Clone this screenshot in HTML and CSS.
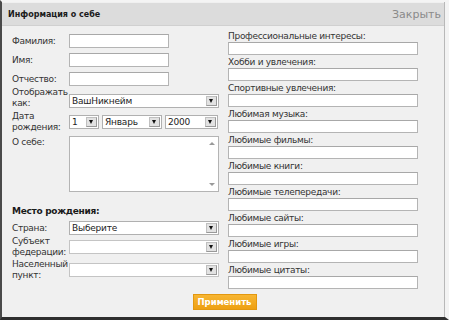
FILE: index.html
```html
<!DOCTYPE html>
<html lang="ru">
<head>
<meta charset="utf-8">
<link rel="stylesheet" href="styles.css">
</head>
<body>
<div class="dialog">
  <div class="header">
    <span class="title">Информация о себе</span>
    <span class="close">Закрыть</span>
  </div>
  <div class="body">
    <div class="left">
      <div class="row r1"><label>Фамилия:</label><div class="input short"></div></div>
      <div class="row r2"><label>Имя:</label><div class="input short"></div></div>
      <div class="row r3"><label>Отчество:</label><div class="input short"></div></div>
      <div class="row two r4"><label>Отображать<br>как:</label><div class="select wide"><span>ВашНикнейм</span><i class="arr"></i></div></div>
      <div class="row two r5"><label>Дата<br>рождения:</label>
        <div class="dates">
          <div class="select d1"><span>1</span><i class="arr"></i></div>
          <div class="select d2"><span>Январь</span><i class="arr"></i></div>
          <div class="select d3"><span>2000</span><i class="arr"></i></div>
        </div>
      </div>
      <div class="row top r6"><label>О себе:</label><div class="textarea"><i class="sb up"></i><i class="sb down"></i></div></div>
      <div class="heading">Место рождения:</div>
      <div class="row r7"><label>Страна:</label><div class="select wide"><span>Выберите</span><i class="arr"></i></div></div>
      <div class="row two r8"><label>Субъект<br>федерации:</label><div class="select wide empty"><span></span><i class="arr"></i></div></div>
      <div class="row two r9"><label>Населенный<br>пункт:</label><div class="select wide empty"><span></span><i class="arr"></i></div></div>
    </div>
    <div class="right">
      <div class="group"><label>Профессиональные интересы:</label><div class="input long"></div></div>
      <div class="group"><label>Хобби и увлечения:</label><div class="input long"></div></div>
      <div class="group"><label>Спортивные увлечения:</label><div class="input long"></div></div>
      <div class="group"><label>Любимая музыка:</label><div class="input long"></div></div>
      <div class="group"><label>Любимые фильмы:</label><div class="input long"></div></div>
      <div class="group"><label>Любимые книги:</label><div class="input long"></div></div>
      <div class="group"><label>Любимые телепередачи:</label><div class="input long"></div></div>
      <div class="group"><label>Любимые сайты:</label><div class="input long"></div></div>
      <div class="group"><label>Любимые игры:</label><div class="input long"></div></div>
      <div class="group"><label>Любимые цитаты:</label><div class="input long"></div></div>
    </div>
  </div>
  <div class="footer"><button class="apply">Применить</button></div>
</div>
</body>
</html>
```
FILE: styles.css
```css
html, body {
  margin: 0;
  padding: 0;
  background: #2a2a2a;
}
.dialog {
  width: 449px;
  height: 320px;
  box-sizing: border-box;
  background: #f0f0f0;
  border-left: 2px solid #4a4a4a;
  border-right: 4px solid #f3f3f3;
  border-bottom: 3px solid #2e2e2e;
  border-top: 2px solid #f4f4f4;
  font-family: "DejaVu Sans", Verdana, sans-serif;
  color: #333;
  box-shadow: inset -1px 0 0 #b8b8b8;
  overflow: hidden;
}
.header {
  height: 22px;
  margin-top: 1px;
  background: #dcdcdc;
  border-bottom: 1px solid #d0d0d0;
  display: flex;
  align-items: center;
  justify-content: space-between;
  padding: 0 3px 0 6px;
  margin-right: 1px;
}
.title {
  font-weight: bold;
  font-size: 8px;
  color: #1a1a1a;
}
.close {
  font-size: 11px;
  color: #8a8a8a;
}
.body {
  display: flex;
}
.left {
  width: 208px;
  padding: 8px 0 0 10px;
  display: flex;
  flex-direction: column;
}
.row {
  display: flex;
  align-items: center;
}
.row label {
  width: 57px;
  flex: none;
  font-size: 9px;
  line-height: 11px;
  letter-spacing: -0.3px;
}
.row.two {
  height: 22px;
}
.row.top { align-items: flex-start; }
.r2, .r3 { margin-top: 5px; }
.r4 { margin-top: 1px; align-items: flex-end; }
.r4 .select { margin-bottom: 1px; }
.r5 { margin-top: 2px; }
.r6 { margin-top: 3px; }
.r6 label { padding-top: 1px; }
.r7 { margin-top: 4px; }
.r8, .r9 { margin-top: 1px; }
.heading {
  margin-top: 13px;
  font-size: 9px;
  font-weight: bold;
  line-height: 12px;
  letter-spacing: -0.3px;
  color: #1a1a1a;
}
.input {
  height: 14px;
  box-sizing: border-box;
  background: #fff;
  border: 1px solid #b4b4b4;
  border-top-color: #a8a8a8;
}
.input.short { width: 100px; }
.select {
  height: 14px;
  box-sizing: border-box;
  background: #fff;
  border: 1px solid #b0b0b0;
  display: flex;
  align-items: center;
  font-size: 9px;
  letter-spacing: -0.2px;
  color: #222;
  padding-left: 2px;
}
.select span { flex: 1; white-space: nowrap; overflow: hidden; }
.select.wide { width: 150px; }
.select.empty { border-color: #c4c4c4; }
.arr {
  flex: none;
  width: 11px;
  height: 10px;
  box-sizing: border-box;
  margin-right: 1px;
  background: #e2e2e2;
  border: 1px solid #c0c0c0;
  border-right-color: #999;
  border-bottom-color: #999;
  position: relative;
}
.arr::after {
  content: "";
  position: absolute;
  left: 2px;
  top: 2px;
  border-left: 2.5px solid transparent;
  border-right: 2.5px solid transparent;
  border-top: 4px solid #111;
}
.dates {
  display: flex;
  gap: 3px;
}
.d1 { width: 30px; }
.d2 { width: 60px; }
.d3 { width: 53px; }
.textarea {
  width: 150px;
  height: 56px;
  box-sizing: border-box;
  background: #fff;
  border: 1px solid #b4b4b4;
  position: relative;
}
.sb {
  position: absolute;
  right: 3px;
  width: 0;
  height: 0;
  border-left: 3px solid transparent;
  border-right: 3px solid transparent;
}
.sb.up { top: 5px; border-bottom: 3px solid #9a9a9a; }
.sb.down { bottom: 5px; border-top: 3px solid #9a9a9a; }
.right {
  margin-left: 8px;
  padding-top: 4px;
  display: flex;
  flex-direction: column;
  gap: 1px;
}
.group label {
  display: block;
  font-size: 9px;
  line-height: 12px;
  letter-spacing: -0.3px;
  white-space: nowrap;
}
.input.long { width: 190px; height: 13px; }
.footer {
  display: flex;
  justify-content: center;
  margin-top: 5px;
}
.apply {
  width: 64px;
  height: 16px;
  padding: 0;
  border: 1px solid #e3980f;
  background: linear-gradient(#f7b633, #eea012);
  color: #fff;
  font-family: "DejaVu Sans", Verdana, sans-serif;
  font-weight: bold;
  font-size: 8.5px;
  margin-left: 2px;
}
```
